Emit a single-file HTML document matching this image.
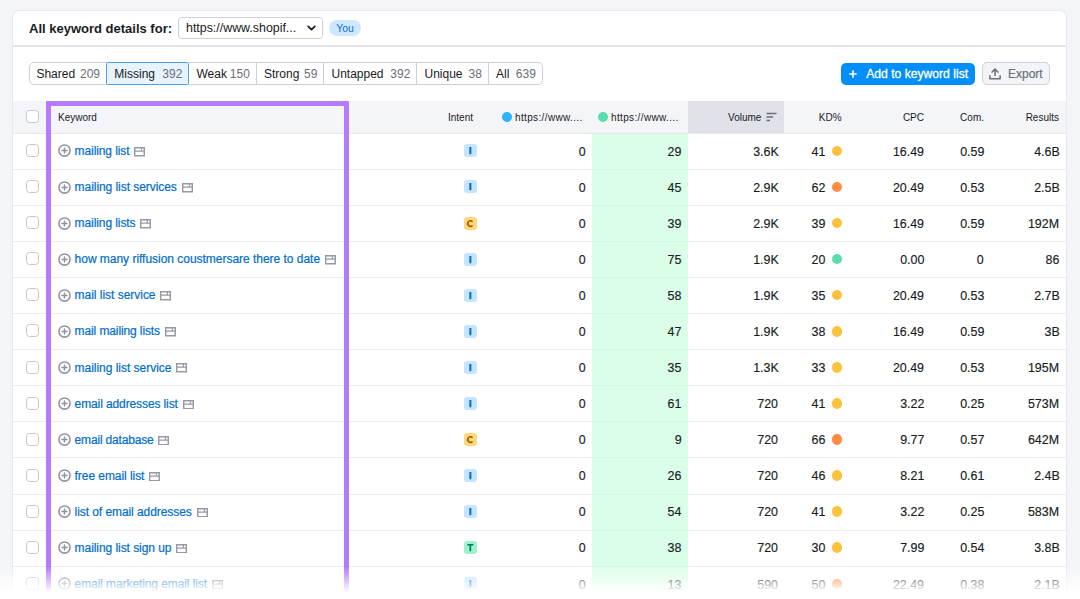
<!DOCTYPE html>
<html><head><meta charset="utf-8"><title>Keyword details</title>
<style>
*{box-sizing:border-box;margin:0;padding:0}
html,body{width:1080px;height:599px;overflow:hidden;background:#f4f5f9;font-family:"Liberation Sans",sans-serif;color:#191b23}
.card{position:absolute;left:13px;top:10.5px;width:1053px;height:620px;background:#fff;border-radius:6px;box-shadow:0 0 1px 1px rgba(25,27,35,.06)}
.title{position:absolute;left:16px;top:10.8px;font-size:13px;font-weight:bold;line-height:16px;color:#191b23;white-space:nowrap}
.sel{position:absolute;left:165px;top:7px;width:145px;height:22px;border:1px solid #cdd0d8;border-radius:4px;background:#fff;font-size:12.4px;line-height:20px;padding-left:7px;color:#191b23;white-space:nowrap}
.sel svg{position:absolute;left:127.5px;top:7.3px;width:9px;height:6.3px}
.you{position:absolute;left:316px;top:10px;width:32px;height:16px;border-radius:8px;background:#cde8fd;color:#0f6fcb;font-size:10.5px;line-height:16px;text-align:center}
.hr{position:absolute;left:0;top:34.8px;width:1053px;height:2px;background:#e0e1e9}
.tabs{position:absolute;left:16px;top:52px;height:23px;display:flex;font-size:12px;line-height:22.6px;white-space:nowrap}
.tab{height:23px;border:1px solid #cdd0d8;border-left:none;background:#fff;color:#191b23;display:flex;justify-content:space-between;padding:0 6px 0 7.2px}
.tab i{font-style:normal;color:#6c6e79}
.tab:first-child{padding-left:6.4px;border-left:1px solid #cdd0d8;border-radius:5px 0 0 5px}
.tab:last-child{border-radius:0 5px 5px 0}
.tab.act{background:#e7f3fd;border:1px solid #4f9fe3;margin-left:-0.7px;border-radius:1.5px;padding-left:7px}
.btn1{position:absolute;left:827.6px;top:52.5px;width:134.8px;height:22.2px;border-radius:5px;background:#008ff8;color:#fff;font-size:12.15px;line-height:23.6px;white-space:nowrap;-webkit-text-stroke:0.3px #fff}
.btn1 .p{position:absolute;left:8.7px;top:7.1px;width:8px;height:8px}
.btn1 .t{position:absolute;left:25.6px;top:0}
.btn2{position:absolute;left:969px;top:52.4px;width:67.7px;height:22.3px;border-radius:5px;background:#f3f4f8;border:1px solid #d0d3da;color:#6c6e79;font-size:12px;line-height:23.2px;white-space:nowrap;-webkit-text-stroke:0.2px #6c6e79}
.btn2 svg{position:absolute;left:5.8px;top:4.4px;width:12px;height:12px}
.btn2 .t{position:absolute;left:25px;top:0}
.thead{position:absolute;left:13px;top:101px;width:1053px;height:33px;background:#f4f5f9;border-bottom:1px solid #e7e8ee;font-size:10px;line-height:33px;color:#191b23;white-space:nowrap}
.thead span{position:absolute;top:0}
.thead .volbg{left:675px;top:0;width:96px;height:32px;background:#e0e1e9}
.dot{width:10px;height:10px;border-radius:50%;top:11px !important}
.row{position:absolute;left:13px;width:1053px;height:36px;border-bottom:1px solid #ecedf3;font-size:12px;line-height:35px;white-space:nowrap;color:#191b23}
.row>span{position:absolute;top:0;z-index:2}
.cb{position:absolute;left:13px;width:12.6px;height:13px;border:1px solid #c4c7cf;border-radius:3.5px;background:#fff}
.kw{left:45px;top:0;height:35.4px;display:flex;align-items:center;color:#006dca}
.plus{width:13px;height:13px;margin-right:3.6px;margin-top:-1.2px;flex:none}
.serp{width:11px;height:9.5px;margin-left:4.8px;margin-top:0.4px;flex:none}
.kt{position:relative;top:0px;-webkit-text-stroke:0.2px #006dca}
.in{left:451px;top:10.5px !important;width:12.7px;height:13px;border-radius:3px;font-size:10.2px;font-weight:bold;line-height:13.6px;text-align:center}
.in svg{display:block;width:12.7px;height:13px}
.inI{background:#c4e5fe;color:#1268c6}
.inC{background:#fcd87c;color:#a75800}
.inT{background:#9ef2c9;color:#007c65}
.n{-webkit-text-stroke:0.15px #191b23;top:0.8px !important;text-align:right;font-size:12px;transform:scaleX(1.035);transform-origin:right center}
.kd{left:818.7px;top:11.8px !important;width:10.5px;height:10.5px;border-radius:50%}
.kdy{background:#fdc23c}
.kdo{background:#ff8c43}
.kdg{background:#59ddaa}
.gcol{position:absolute;left:592px;top:134px;width:96px;height:470px;background:rgba(195,253,217,0.6);z-index:1}
.frame{position:absolute;left:46px;top:101px;width:303px;height:520px;border:5px solid #b47cfd;border-radius:1px;z-index:3}
.fade{z-index:4;position:absolute;left:0;top:567px;width:1080px;height:32px;background:linear-gradient(to bottom,rgba(255,255,255,0) 0px,rgba(255,255,255,1) 25.5px,#fff 32px)}
</style></head><body>
<div class="card"><div style="position:absolute;left:0;top:-0.5px;width:1053px;height:100px">
<div class="title">All keyword details for:</div>
<div class="sel">https://www.shopif...<svg viewBox="0 0 10 7"><path d="M1.3 1.5L5 5.2 8.7 1.5" fill="none" stroke="#191b23" stroke-width="1.9" stroke-linecap="round" stroke-linejoin="round"/></svg></div>
<div class="you">You</div>
<div class="hr"></div>
<div class="tabs">
<div class="tab" style="width:78px">Shared<i>209</i></div>
<div class="tab act" style="width:83px">Missing<i>392</i></div>
<div class="tab" style="width:67.5px">Weak<i>150</i></div>
<div class="tab" style="width:67.5px">Strong<i>59</i></div>
<div class="tab" style="width:93px">Untapped<i>392</i></div>
<div class="tab" style="width:71.5px">Unique<i>38</i></div>
<div class="tab" style="width:54px">All<i>639</i></div>
</div>
<div class="btn1"><svg class="p" viewBox="0 0 8 8"><path d="M4 0.3v7.4M0.3 4h7.4" stroke="#fff" stroke-width="1.6" fill="none"/></svg><span class="t">Add to keyword list</span></div>
<div class="btn2"><svg viewBox="0 0 12 12"><path d="M6 8V1.4M2.6 4.5L6 1.1l3.4 3.4M0.9 7.3v3.4h10.2V7.3" fill="none" stroke="#6c6e79" stroke-width="1.5"/></svg><span class="t">Export</span></div>
</div></div>
<div class="gcol"></div>
<div class="thead">
<span class="volbg"></span>
<span class="cb" style="top:9px"></span>
<span style="left:45px">Keyword</span>
<span style="right:593px">Intent</span>
<span class="dot" style="left:489px;background:#2bb3ff"></span>
<span style="left:502px;letter-spacing:0.36px">https://www....</span>
<span class="dot" style="left:585.3px;background:#59ddaa"></span>
<span style="left:598px;letter-spacing:0.36px">https://www....</span>
<span style="right:304.6px">Volume</span>
<svg style="position:absolute;left:753px;top:11px;width:11px;height:10px" viewBox="0 0 11 10"><path d="M0.5 1.5h10M0.5 5h6.5M0.5 8.5h3.5" stroke="#6c6e79" stroke-width="1.3" fill="none"/></svg>
<span style="right:224.4px">KD%</span>
<span style="right:142px">CPC</span>
<span style="right:82px">Com.</span>
<span style="right:7px">Results</span>
</div>
<div class="row" style="top:133.9px">
<span class="cb" style="top:10.2px"></span>
<span class="kw"><svg class="plus" viewBox="0 0 13 13"><circle cx="6.5" cy="6.5" r="5.6" fill="none" stroke="#8f929f" stroke-width="1.55"/><path d="M6.5 3.4v6.2M3.4 6.5h6.2" stroke="#8f929f" stroke-width="1.5" fill="none"/></svg><span class="kt" style="letter-spacing:-0.101px">mailing list</span><svg class="serp" viewBox="0 0 11 9.5"><path d="M0.7 0.7h9.6v8.1H0.7zM0.7 4.1h9.6" fill="none" stroke="#9799a5" stroke-width="1.45"/><path d="M7.4 0.7v3.4" fill="none" stroke="#9799a5" stroke-width="1.1"/></svg></span>
<span class="in inI"><svg viewBox="0 0 13 13"><rect x="5.45" y="2.9" width="2.1" height="7.4" fill="currentColor"/></svg></span>
<span class="n" style="right:480.4px">0</span>
<span class="n" style="right:384.6px">29</span>
<span class="n" style="right:287.6px">3.6K</span>
<span class="n" style="right:240.6px">41</span><span class="kd kdy"></span>
<span class="n" style="right:141.6px">16.49</span>
<span class="n" style="right:82px">0.59</span>
<span class="n" style="right:6.6px">4.6B</span>
</div>
<div class="row" style="top:169.97px">
<span class="cb" style="top:10.2px"></span>
<span class="kw"><svg class="plus" viewBox="0 0 13 13"><circle cx="6.5" cy="6.5" r="5.6" fill="none" stroke="#8f929f" stroke-width="1.55"/><path d="M6.5 3.4v6.2M3.4 6.5h6.2" stroke="#8f929f" stroke-width="1.5" fill="none"/></svg><span class="kt" style="letter-spacing:-0.055px">mailing list services</span><svg class="serp" viewBox="0 0 11 9.5"><path d="M0.7 0.7h9.6v8.1H0.7zM0.7 4.1h9.6" fill="none" stroke="#9799a5" stroke-width="1.45"/><path d="M7.4 0.7v3.4" fill="none" stroke="#9799a5" stroke-width="1.1"/></svg></span>
<span class="in inI"><svg viewBox="0 0 13 13"><rect x="5.45" y="2.9" width="2.1" height="7.4" fill="currentColor"/></svg></span>
<span class="n" style="right:480.4px">0</span>
<span class="n" style="right:384.6px">45</span>
<span class="n" style="right:287.6px">2.9K</span>
<span class="n" style="right:240.6px">62</span><span class="kd kdo"></span>
<span class="n" style="right:141.6px">20.49</span>
<span class="n" style="right:82px">0.53</span>
<span class="n" style="right:6.6px">2.5B</span>
</div>
<div class="row" style="top:206.04px">
<span class="cb" style="top:10.2px"></span>
<span class="kw"><svg class="plus" viewBox="0 0 13 13"><circle cx="6.5" cy="6.5" r="5.6" fill="none" stroke="#8f929f" stroke-width="1.55"/><path d="M6.5 3.4v6.2M3.4 6.5h6.2" stroke="#8f929f" stroke-width="1.5" fill="none"/></svg><span class="kt" style="letter-spacing:-0.09px">mailing lists</span><svg class="serp" viewBox="0 0 11 9.5"><path d="M0.7 0.7h9.6v8.1H0.7zM0.7 4.1h9.6" fill="none" stroke="#9799a5" stroke-width="1.45"/><path d="M7.4 0.7v3.4" fill="none" stroke="#9799a5" stroke-width="1.1"/></svg></span>
<span class="in inC"><svg viewBox="0 0 13 13"><path d="M8.75 4.7A2.75 2.9 0 1 0 8.75 8.5" fill="none" stroke="currentColor" stroke-width="1.6"/></svg></span>
<span class="n" style="right:480.4px">0</span>
<span class="n" style="right:384.6px">39</span>
<span class="n" style="right:287.6px">2.9K</span>
<span class="n" style="right:240.6px">39</span><span class="kd kdy"></span>
<span class="n" style="right:141.6px">16.49</span>
<span class="n" style="right:82px">0.59</span>
<span class="n" style="right:6.6px">192M</span>
</div>
<div class="row" style="top:242.11px">
<span class="cb" style="top:10.2px"></span>
<span class="kw"><svg class="plus" viewBox="0 0 13 13"><circle cx="6.5" cy="6.5" r="5.6" fill="none" stroke="#8f929f" stroke-width="1.55"/><path d="M6.5 3.4v6.2M3.4 6.5h6.2" stroke="#8f929f" stroke-width="1.5" fill="none"/></svg><span class="kt" style="letter-spacing:-0.024px">how many riffusion coustmersare there to date</span><svg class="serp" viewBox="0 0 11 9.5"><path d="M0.7 0.7h9.6v8.1H0.7zM0.7 4.1h9.6" fill="none" stroke="#9799a5" stroke-width="1.45"/><path d="M7.4 0.7v3.4" fill="none" stroke="#9799a5" stroke-width="1.1"/></svg></span>
<span class="in inI"><svg viewBox="0 0 13 13"><rect x="5.45" y="2.9" width="2.1" height="7.4" fill="currentColor"/></svg></span>
<span class="n" style="right:480.4px">0</span>
<span class="n" style="right:384.6px">75</span>
<span class="n" style="right:287.6px">1.9K</span>
<span class="n" style="right:240.6px">20</span><span class="kd kdg"></span>
<span class="n" style="right:141.6px">0.00</span>
<span class="n" style="right:82px">0</span>
<span class="n" style="right:6.6px">86</span>
</div>
<div class="row" style="top:278.18px">
<span class="cb" style="top:10.2px"></span>
<span class="kw"><svg class="plus" viewBox="0 0 13 13"><circle cx="6.5" cy="6.5" r="5.6" fill="none" stroke="#8f929f" stroke-width="1.55"/><path d="M6.5 3.4v6.2M3.4 6.5h6.2" stroke="#8f929f" stroke-width="1.5" fill="none"/></svg><span class="kt" style="letter-spacing:-0.025px">mail list service</span><svg class="serp" viewBox="0 0 11 9.5"><path d="M0.7 0.7h9.6v8.1H0.7zM0.7 4.1h9.6" fill="none" stroke="#9799a5" stroke-width="1.45"/><path d="M7.4 0.7v3.4" fill="none" stroke="#9799a5" stroke-width="1.1"/></svg></span>
<span class="in inI"><svg viewBox="0 0 13 13"><rect x="5.45" y="2.9" width="2.1" height="7.4" fill="currentColor"/></svg></span>
<span class="n" style="right:480.4px">0</span>
<span class="n" style="right:384.6px">58</span>
<span class="n" style="right:287.6px">1.9K</span>
<span class="n" style="right:240.6px">35</span><span class="kd kdy"></span>
<span class="n" style="right:141.6px">20.49</span>
<span class="n" style="right:82px">0.53</span>
<span class="n" style="right:6.6px">2.7B</span>
</div>
<div class="row" style="top:314.25px">
<span class="cb" style="top:10.2px"></span>
<span class="kw"><svg class="plus" viewBox="0 0 13 13"><circle cx="6.5" cy="6.5" r="5.6" fill="none" stroke="#8f929f" stroke-width="1.55"/><path d="M6.5 3.4v6.2M3.4 6.5h6.2" stroke="#8f929f" stroke-width="1.5" fill="none"/></svg><span class="kt" style="letter-spacing:-0.109px">mail mailing lists</span><svg class="serp" viewBox="0 0 11 9.5"><path d="M0.7 0.7h9.6v8.1H0.7zM0.7 4.1h9.6" fill="none" stroke="#9799a5" stroke-width="1.45"/><path d="M7.4 0.7v3.4" fill="none" stroke="#9799a5" stroke-width="1.1"/></svg></span>
<span class="in inI"><svg viewBox="0 0 13 13"><rect x="5.45" y="2.9" width="2.1" height="7.4" fill="currentColor"/></svg></span>
<span class="n" style="right:480.4px">0</span>
<span class="n" style="right:384.6px">47</span>
<span class="n" style="right:287.6px">1.9K</span>
<span class="n" style="right:240.6px">38</span><span class="kd kdy"></span>
<span class="n" style="right:141.6px">16.49</span>
<span class="n" style="right:82px">0.59</span>
<span class="n" style="right:6.6px">3B</span>
</div>
<div class="row" style="top:350.32px">
<span class="cb" style="top:10.2px"></span>
<span class="kw"><svg class="plus" viewBox="0 0 13 13"><circle cx="6.5" cy="6.5" r="5.6" fill="none" stroke="#8f929f" stroke-width="1.55"/><path d="M6.5 3.4v6.2M3.4 6.5h6.2" stroke="#8f929f" stroke-width="1.5" fill="none"/></svg><span class="kt" style="letter-spacing:-0.028px">mailing list service</span><svg class="serp" viewBox="0 0 11 9.5"><path d="M0.7 0.7h9.6v8.1H0.7zM0.7 4.1h9.6" fill="none" stroke="#9799a5" stroke-width="1.45"/><path d="M7.4 0.7v3.4" fill="none" stroke="#9799a5" stroke-width="1.1"/></svg></span>
<span class="in inI"><svg viewBox="0 0 13 13"><rect x="5.45" y="2.9" width="2.1" height="7.4" fill="currentColor"/></svg></span>
<span class="n" style="right:480.4px">0</span>
<span class="n" style="right:384.6px">35</span>
<span class="n" style="right:287.6px">1.3K</span>
<span class="n" style="right:240.6px">33</span><span class="kd kdy"></span>
<span class="n" style="right:141.6px">20.49</span>
<span class="n" style="right:82px">0.53</span>
<span class="n" style="right:6.6px">195M</span>
</div>
<div class="row" style="top:386.39px">
<span class="cb" style="top:10.2px"></span>
<span class="kw"><svg class="plus" viewBox="0 0 13 13"><circle cx="6.5" cy="6.5" r="5.6" fill="none" stroke="#8f929f" stroke-width="1.55"/><path d="M6.5 3.4v6.2M3.4 6.5h6.2" stroke="#8f929f" stroke-width="1.5" fill="none"/></svg><span class="kt" style="letter-spacing:-0.109px">email addresses list</span><svg class="serp" viewBox="0 0 11 9.5"><path d="M0.7 0.7h9.6v8.1H0.7zM0.7 4.1h9.6" fill="none" stroke="#9799a5" stroke-width="1.45"/><path d="M7.4 0.7v3.4" fill="none" stroke="#9799a5" stroke-width="1.1"/></svg></span>
<span class="in inI"><svg viewBox="0 0 13 13"><rect x="5.45" y="2.9" width="2.1" height="7.4" fill="currentColor"/></svg></span>
<span class="n" style="right:480.4px">0</span>
<span class="n" style="right:384.6px">61</span>
<span class="n" style="right:287.6px">720</span>
<span class="n" style="right:240.6px">41</span><span class="kd kdy"></span>
<span class="n" style="right:141.6px">3.22</span>
<span class="n" style="right:82px">0.25</span>
<span class="n" style="right:6.6px">573M</span>
</div>
<div class="row" style="top:422.46px">
<span class="cb" style="top:10.2px"></span>
<span class="kw"><svg class="plus" viewBox="0 0 13 13"><circle cx="6.5" cy="6.5" r="5.6" fill="none" stroke="#8f929f" stroke-width="1.55"/><path d="M6.5 3.4v6.2M3.4 6.5h6.2" stroke="#8f929f" stroke-width="1.5" fill="none"/></svg><span class="kt" style="letter-spacing:-0.171px">email database</span><svg class="serp" viewBox="0 0 11 9.5"><path d="M0.7 0.7h9.6v8.1H0.7zM0.7 4.1h9.6" fill="none" stroke="#9799a5" stroke-width="1.45"/><path d="M7.4 0.7v3.4" fill="none" stroke="#9799a5" stroke-width="1.1"/></svg></span>
<span class="in inC"><svg viewBox="0 0 13 13"><path d="M8.75 4.7A2.75 2.9 0 1 0 8.75 8.5" fill="none" stroke="currentColor" stroke-width="1.6"/></svg></span>
<span class="n" style="right:480.4px">0</span>
<span class="n" style="right:384.6px">9</span>
<span class="n" style="right:287.6px">720</span>
<span class="n" style="right:240.6px">66</span><span class="kd kdo"></span>
<span class="n" style="right:141.6px">9.77</span>
<span class="n" style="right:82px">0.57</span>
<span class="n" style="right:6.6px">642M</span>
</div>
<div class="row" style="top:458.53px">
<span class="cb" style="top:10.2px"></span>
<span class="kw"><svg class="plus" viewBox="0 0 13 13"><circle cx="6.5" cy="6.5" r="5.6" fill="none" stroke="#8f929f" stroke-width="1.55"/><path d="M6.5 3.4v6.2M3.4 6.5h6.2" stroke="#8f929f" stroke-width="1.5" fill="none"/></svg><span class="kt" style="letter-spacing:-0.059px">free email list</span><svg class="serp" viewBox="0 0 11 9.5"><path d="M0.7 0.7h9.6v8.1H0.7zM0.7 4.1h9.6" fill="none" stroke="#9799a5" stroke-width="1.45"/><path d="M7.4 0.7v3.4" fill="none" stroke="#9799a5" stroke-width="1.1"/></svg></span>
<span class="in inI"><svg viewBox="0 0 13 13"><rect x="5.45" y="2.9" width="2.1" height="7.4" fill="currentColor"/></svg></span>
<span class="n" style="right:480.4px">0</span>
<span class="n" style="right:384.6px">26</span>
<span class="n" style="right:287.6px">720</span>
<span class="n" style="right:240.6px">46</span><span class="kd kdy"></span>
<span class="n" style="right:141.6px">8.21</span>
<span class="n" style="right:82px">0.61</span>
<span class="n" style="right:6.6px">2.4B</span>
</div>
<div class="row" style="top:494.6px">
<span class="cb" style="top:10.2px"></span>
<span class="kw"><svg class="plus" viewBox="0 0 13 13"><circle cx="6.5" cy="6.5" r="5.6" fill="none" stroke="#8f929f" stroke-width="1.55"/><path d="M6.5 3.4v6.2M3.4 6.5h6.2" stroke="#8f929f" stroke-width="1.5" fill="none"/></svg><span class="kt" style="letter-spacing:-0.07px">list of email addresses</span><svg class="serp" viewBox="0 0 11 9.5"><path d="M0.7 0.7h9.6v8.1H0.7zM0.7 4.1h9.6" fill="none" stroke="#9799a5" stroke-width="1.45"/><path d="M7.4 0.7v3.4" fill="none" stroke="#9799a5" stroke-width="1.1"/></svg></span>
<span class="in inI"><svg viewBox="0 0 13 13"><rect x="5.45" y="2.9" width="2.1" height="7.4" fill="currentColor"/></svg></span>
<span class="n" style="right:480.4px">0</span>
<span class="n" style="right:384.6px">54</span>
<span class="n" style="right:287.6px">720</span>
<span class="n" style="right:240.6px">41</span><span class="kd kdy"></span>
<span class="n" style="right:141.6px">3.22</span>
<span class="n" style="right:82px">0.25</span>
<span class="n" style="right:6.6px">583M</span>
</div>
<div class="row" style="top:530.67px">
<span class="cb" style="top:10.2px"></span>
<span class="kw"><svg class="plus" viewBox="0 0 13 13"><circle cx="6.5" cy="6.5" r="5.6" fill="none" stroke="#8f929f" stroke-width="1.55"/><path d="M6.5 3.4v6.2M3.4 6.5h6.2" stroke="#8f929f" stroke-width="1.5" fill="none"/></svg><span class="kt" style="letter-spacing:-0.062px">mailing list sign up</span><svg class="serp" viewBox="0 0 11 9.5"><path d="M0.7 0.7h9.6v8.1H0.7zM0.7 4.1h9.6" fill="none" stroke="#9799a5" stroke-width="1.45"/><path d="M7.4 0.7v3.4" fill="none" stroke="#9799a5" stroke-width="1.1"/></svg></span>
<span class="in inT"><svg viewBox="0 0 13 13"><path d="M3.45 3h6.1v1.55H7.35v5.75H5.65V4.55H3.45z" fill="currentColor"/></svg></span>
<span class="n" style="right:480.4px">0</span>
<span class="n" style="right:384.6px">38</span>
<span class="n" style="right:287.6px">720</span>
<span class="n" style="right:240.6px">30</span><span class="kd kdy"></span>
<span class="n" style="right:141.6px">7.99</span>
<span class="n" style="right:82px">0.54</span>
<span class="n" style="right:6.6px">3.8B</span>
</div>
<div class="row" style="top:566.74px">
<span class="cb" style="top:10.2px"></span>
<span class="kw"><svg class="plus" viewBox="0 0 13 13"><circle cx="6.5" cy="6.5" r="5.6" fill="none" stroke="#8f929f" stroke-width="1.55"/><path d="M6.5 3.4v6.2M3.4 6.5h6.2" stroke="#8f929f" stroke-width="1.5" fill="none"/></svg><span class="kt" style="letter-spacing:-0.089px">email marketing email list</span><svg class="serp" viewBox="0 0 11 9.5"><path d="M0.7 0.7h9.6v8.1H0.7zM0.7 4.1h9.6" fill="none" stroke="#9799a5" stroke-width="1.45"/><path d="M7.4 0.7v3.4" fill="none" stroke="#9799a5" stroke-width="1.1"/></svg></span>
<span class="in inI"><svg viewBox="0 0 13 13"><rect x="5.45" y="2.9" width="2.1" height="7.4" fill="currentColor"/></svg></span>
<span class="n" style="right:480.4px">0</span>
<span class="n" style="right:384.6px">13</span>
<span class="n" style="right:287.6px">590</span>
<span class="n" style="right:240.6px">50</span><span class="kd kdo"></span>
<span class="n" style="right:141.6px">22.49</span>
<span class="n" style="right:82px">0.38</span>
<span class="n" style="right:6.6px">2.1B</span>
</div>
<div class="frame"></div>
<div class="fade"></div>
</body></html>
